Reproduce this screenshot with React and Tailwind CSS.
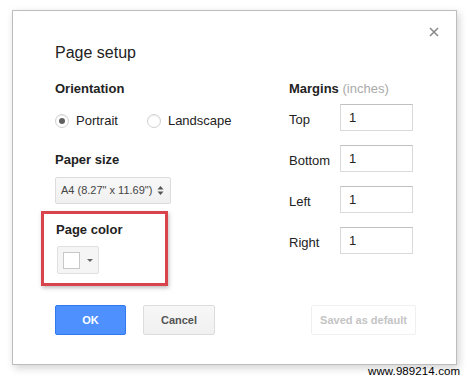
import React from "react";

const font = { fontFamily: '"Liberation Sans", Arial, sans-serif' };

const Radio = ({ checked, label }) => (
    <label className="flex items-center gap-[7px] text-[13px] leading-[16px] text-[#222]">
        <span className="w-[14px] h-[14px] rounded-full border border-[#d0d0d0] bg-white flex items-center justify-center shadow-[inset_0_1px_1px_rgba(0,0,0,0.08)]">
            {checked && <span className="w-[6px] h-[6px] rounded-full bg-[#606060]" />}
        </span>
        {label}
    </label>
);

const MarginRow = ({ label }) => (
    <div className="flex items-center">
        <span className="w-[51px] text-[13px] leading-[16px] text-[#222] pt-[4px]">{label}</span>
        <div className="w-[73px] h-[27px] border border-[#d9d9d9] border-t-[#c0c0c0] bg-white flex items-center pl-[8px] text-[13px] text-[#222]">
            1
        </div>
    </div>
);

const App = () => {
    return (
        <div className="relative w-[474px] h-[378px] bg-white overflow-hidden" style={font}>
            <div className="ml-[12px] mt-[10px] w-[445px] h-[355px] border border-[#bdbdbd] bg-white shadow-[2px_3px_8px_rgba(0,0,0,0.18)] relative pl-[42px] pr-[40px] pt-[32px]">
                {/* close */}
                <svg className="absolute top-[16px] right-[17px]" width="10" height="10" viewBox="0 0 10 10">
                    <path d="M1 1 L9 9 M9 1 L1 9" stroke="#8a8a8a" strokeWidth="1.6" />
                </svg>

                <h1 className="text-[16px] leading-[20px] text-[#222]">Page setup</h1>

                <div className="flex mt-[18px]">
                    {/* left column */}
                    <div className="w-[234px] flex flex-col">
                        <h2 className="text-[13px] leading-[16px] font-bold text-[#222]">Orientation</h2>
                        <div className="flex items-center gap-[29px] mt-[16px]">
                            <Radio checked label="Portrait" />
                            <Radio label="Landscape" />
                        </div>
                        <h2 className="text-[13px] leading-[16px] font-bold text-[#222] mt-[23px]">Paper size</h2>
                        <div className="mt-[9px] w-[116px] h-[27px] border border-[#dcdcdc] rounded-[2px] bg-gradient-to-b from-[#f8f8f8] to-[#f0f0f0] flex items-center pl-[5px] text-[11px] text-[#444]">
                            A4 (8.27" x 11.69")
                            <svg className="ml-[5px]" width="7" height="11" viewBox="0 0 7 11">
                                <path d="M0.5 4.5 L3.5 1 L6.5 4.5 Z M0.5 6.5 L3.5 10 L6.5 6.5 Z" fill="#555" />
                            </svg>
                        </div>

                        {/* highlighted section */}
                        <div className="mt-[7px] -ml-[14px] w-[127px] border-[3px] border-[#d9434b] shadow-[1px_2px_4px_rgba(0,0,0,0.25)] pl-[12px] pt-[8px] pb-[9px]">
                            <h2 className="text-[13px] leading-[16px] font-bold text-[#222]">Page color</h2>
                            <div className="mt-[8px] ml-[1px] w-[42px] h-[28px] border border-[#e0e0e0] rounded-[2px] bg-[#f5f5f5] flex items-center pl-[5px]">
                                <span className="w-[17px] h-[17px] border border-[#c8c8c8] bg-white" />
                                <svg className="ml-[7px]" width="6" height="3" viewBox="0 0 6 3">
                                    <path d="M0 0 L6 0 L3 3 Z" fill="#666" />
                                </svg>
                            </div>
                        </div>
                    </div>

                    {/* right column */}
                    <div className="flex flex-col">
                        <h2 className="text-[13px] leading-[16px] font-bold text-[#222]">
                            Margins <span className="font-normal text-[#aaa]">(inches)</span>
                        </h2>
                        <div className="flex flex-col gap-[14px] mt-[7px]">
                            <MarginRow label="Top" />
                            <MarginRow label="Bottom" />
                            <MarginRow label="Left" />
                            <MarginRow label="Right" />
                        </div>
                    </div>
                </div>

                {/* footer */}
                <div className="flex items-center mt-[19px]">
                    <button className="w-[71px] h-[30px] rounded-[2px] border border-[#3079ed] bg-[#4d90fe] text-white text-[11px] font-bold">
                        OK
                    </button>
                    <button className="ml-[17px] w-[72px] h-[30px] rounded-[2px] border border-[#dcdcdc] bg-gradient-to-b from-[#f7f7f7] to-[#f0f0f0] text-[#555] text-[11px] font-bold">
                        Cancel
                    </button>
                    <button className="ml-auto w-[105px] h-[30px] rounded-[2px] border border-[#f0f0f0] bg-white text-[#c4c4c4] text-[11px] font-bold">
                        Saved as default
                    </button>
                </div>
            </div>

            <div className="absolute left-[368px] top-[364px] text-[11.5px] leading-[14px] text-black tracking-[0.1px]">
                www.989214.com
            </div>
        </div>
    );
};

export default App;
